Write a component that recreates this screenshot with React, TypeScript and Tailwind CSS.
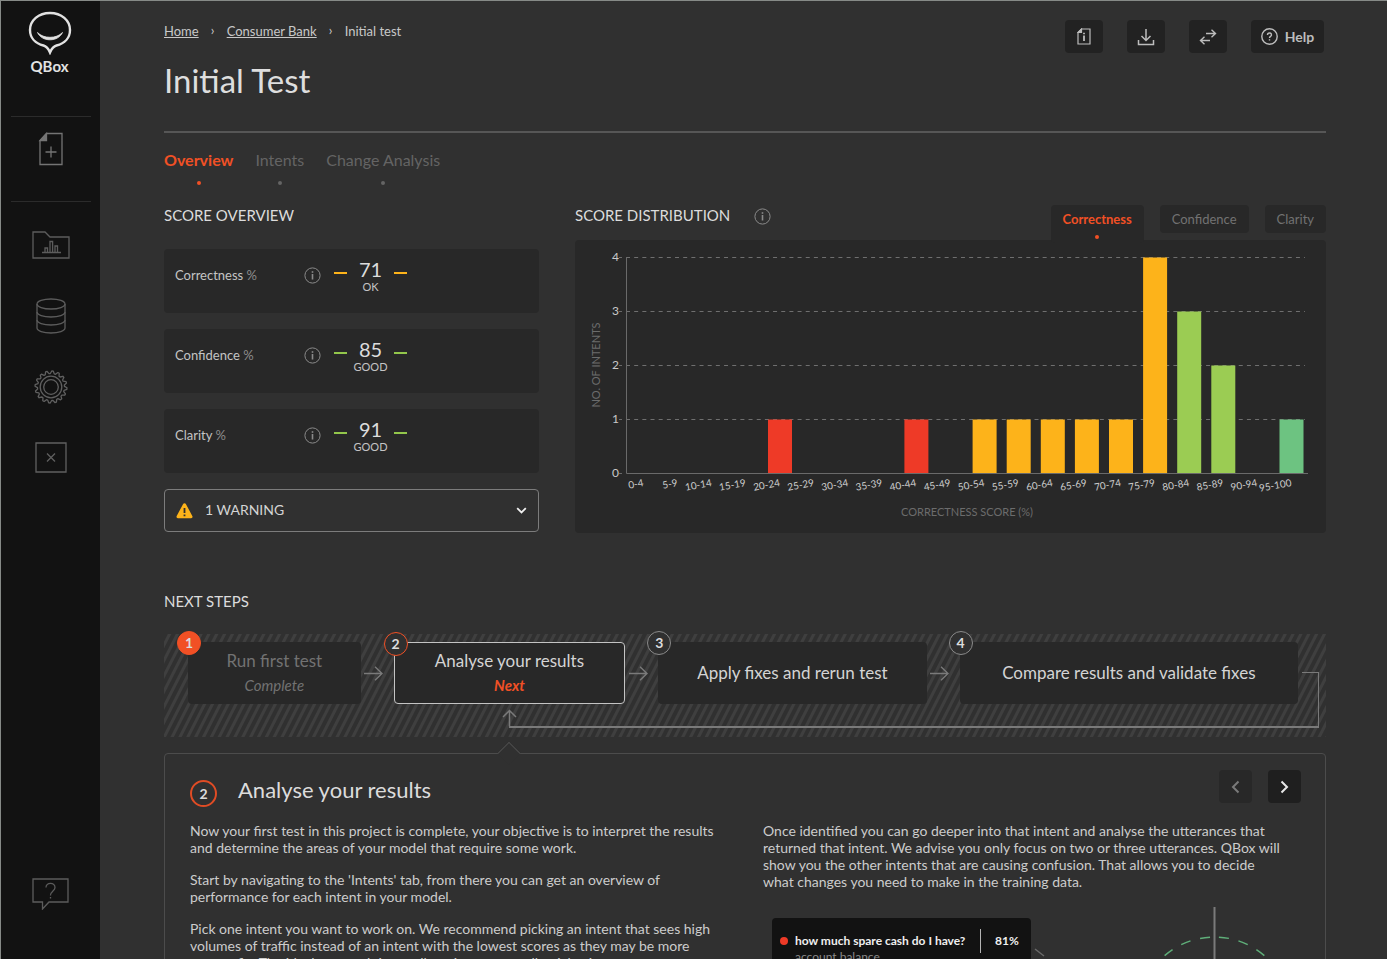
import { ReactNode, useState } from 'react'
import clsx from 'clsx'

const metrics = [
  { name: 'Correctness', score: 71, rating: 'OK', dash: 'bg-[#fdb31a]' },
  { name: 'Confidence', score: 85, rating: 'GOOD', dash: 'bg-[#93c64b]' },
  { name: 'Clarity', score: 91, rating: 'GOOD', dash: 'bg-[#93c64b]' },
]

const RED = '#ee3a27'
const AMBER = '#fdb31a'
const GREEN = '#9bcc53'
const TEAL = '#6dc381'

const buckets = [
  { range: '0-4', count: 0 },
  { range: '5-9', count: 0 },
  { range: '10-14', count: 0 },
  { range: '15-19', count: 0 },
  { range: '20-24', count: 1, color: RED },
  { range: '25-29', count: 0 },
  { range: '30-34', count: 0 },
  { range: '35-39', count: 0 },
  { range: '40-44', count: 1, color: RED },
  { range: '45-49', count: 0 },
  { range: '50-54', count: 1, color: AMBER },
  { range: '55-59', count: 1, color: AMBER },
  { range: '60-64', count: 1, color: AMBER },
  { range: '65-69', count: 1, color: AMBER },
  { range: '70-74', count: 1, color: AMBER },
  { range: '75-79', count: 4, color: AMBER },
  { range: '80-84', count: 3, color: GREEN },
  { range: '85-89', count: 2, color: GREEN },
  { range: '90-94', count: 0 },
  { range: '95-100', count: 1, color: TEAL },
]

function InfoIcon() {
  return (
    <svg className="size-[17px] shrink-0" viewBox="0 0 17 17" fill="none" stroke="#8a8a8a">
      <circle cx="8.5" cy="8.5" r="7.6" />
      <path d="M8.5 7v5.5" strokeWidth="1.6" />
      <path d="M8.5 4.2v1.6" strokeWidth="1.6" />
    </svg>
  )
}

function Sidebar() {
  const link = 'flex h-[71px] w-full items-center justify-center'
  return (
    <aside className="flex w-[99px] shrink-0 flex-col items-center bg-[#121212] pt-[10px]">
      <a href="#" className="flex flex-col items-center pr-0.5 text-[#e2e2e2]">
        <svg className="h-[44px] w-[44px]" viewBox="0 0 44 44" fill="none" stroke="currentColor">
          <path
            d="M22 2C10.500 2 2 9.500 2 19c0 8 5.500 13.500 13.500 15.500 3.200.800 5 3.500 6.500 7 1.500-3.500 3.300-6.200 6.500-7C36.500 32.500 42 27 42 19 42 9.500 33.500 2 22 2Z"
            strokeWidth="2.400"
          />
          <path d="M9.500 21.500c3 3.200 7.500 4.800 12.500 4.800s9.500-1.600 12.500-4.800c-2.200 4.600-6.800 7.300-12.500 7.300S11.700 26.100 9.500 21.500Z" fill="currentColor" strokeWidth=".8" />
        </svg>
        <span className="mt-[3px] text-[15px] leading-4 font-bold">QBox</span>
      </a>

      <hr className="mt-[42px] w-20 border-t border-[#2b2b2b]" />
      <a href="#" aria-label="New test" className="my-[15px]">
        <svg className="h-[34px] w-[26px]" viewBox="0 0 26 34" fill="none" stroke="#747474" strokeWidth="1.300">
          <path d="M8.500 1.500H24v31H2V8.500Z" />
          <path d="M8.500 1.500V8.500H2Z" fill="#747474" />
          <path d="M13 14.500v11M7.500 20h11" />
        </svg>
      </a>
      <hr className="mt-5 w-20 border-t border-[#2b2b2b]" />

      <nav className="mt-[7px] flex w-full flex-col">
        <a href="#" aria-label="Projects" className={link}>
          <svg className="h-[28px] w-[38px]" viewBox="0 0 38 28" fill="none" stroke="#5c5c5c" strokeWidth="1.300">
            <path d="M1 1h12l5 5h19v21H1Z" />
            <path d="M10 21.500h19M13 21.500v-4.500h2.500v4.500M18 21.500v-11h2.600v11M23 21.500v-6.500h2.500v6.500" />
          </svg>
        </a>
        <a href="#" aria-label="Data" className={link}>
          <svg className="h-[36px] w-[30px]" viewBox="0 0 30 36" fill="none" stroke="#5c5c5c" strokeWidth="1.300">
            <ellipse cx="15" cy="6" rx="14" ry="5" />
            <path d="M1 6v24c0 2.800 6.300 5 14 5s14-2.200 14-5V6" />
            <path d="M1 14c0 2.800 6.300 5 14 5s14-2.200 14-5M1 22c0 2.800 6.300 5 14 5s14-2.200 14-5" />
          </svg>
        </a>
        <a href="#" aria-label="Settings" className={link}>
          <GearIcon />
        </a>
        <a href="#" aria-label="Close" className={link}>
          <svg className="h-[31px] w-[32px]" viewBox="0 0 32 31" fill="none" stroke="#606060" strokeWidth="1.300">
            <path d="M1 1h30v29H1Z" />
            <path d="m12 11.500 8 8M20 11.500l-8 8" />
          </svg>
        </a>
      </nav>

      <a href="#" aria-label="Support" className="mt-auto mb-[49px]">
        <svg className="h-[32px] w-[37px]" viewBox="0 0 37 32" fill="none" stroke="#5c5c5c" strokeWidth="1.300">
          <path d="M1 1h35v23H17l-6.500 7v-7H1Z" />
          <path d="M14 9.500c0-2.500 2-4.200 4.500-4.200S23 7 23 9.500c0 3.500-4.500 3.500-4.500 8" />
          <path d="M18.500 19v1.500" />
        </svg>
      </a>
    </aside>
  )
}

function GearIcon() {
  const teeth = 16
  const points = Array.from({ length: teeth * 4 }, (_, i) => {
    const radius = i % 4 < 2 ? 16 : 13.5
    const angle = ((i + 0.5) / (teeth * 4)) * Math.PI * 2
    return `${17 + radius * Math.cos(angle)},${17 + radius * Math.sin(angle)}`
  })
  return (
    <svg className="size-[34px]" viewBox="0 0 34 34" fill="none" stroke="#606060" strokeWidth="1.300">
      <polygon points={points.join(' ')} strokeLinejoin="round" />
      <circle cx="17" cy="17" r="10.800" />
      <circle cx="17" cy="17" r="7.300" />
    </svg>
  )
}

function ToolButton({ label, children }: { label: string; children: ReactNode }) {
  return (
    <button aria-label={label} className="flex h-[33px] w-[38px] items-center justify-center rounded bg-[#222]">
      {children}
    </button>
  )
}

function Header() {
  return (
    <header className="flex items-start justify-between border-b-2 border-[#565656] pt-[19px] pb-[31px]">
      <div className="pt-0.5">
        <nav className="flex items-center text-[13px] leading-4 text-[#c8c8c8]">
          <a href="#" className="underline">Home</a>
          <span className="w-7 pb-0.5 text-center">›</span>
          <a href="#" className="underline">Consumer Bank</a>
          <span className="w-7 pb-0.5 text-center">›</span>
          <span>Initial test</span>
        </nav>
        <h1 className="mt-5 text-[33px] leading-10 text-[#dedede]">Initial Test</h1>
      </div>

      <div className="flex gap-6 pr-0.5 text-[#bdbdbd]">
        <ToolButton label="Report">
          <svg className="h-[17px] w-[14px]" viewBox="0 0 14 17" fill="none" stroke="currentColor" strokeWidth="1.200">
            <path d="M4.500 1H13v15H1V4.500Z" />
            <path d="M4.500 1v3.500H1Z" fill="currentColor" />
            <path d="M7 7.500V13M7 4.800v1.500" strokeWidth="1.800" />
          </svg>
        </ToolButton>
        <ToolButton label="Download">
          <svg className="size-[18px]" viewBox="0 0 18 18" fill="none" stroke="currentColor" strokeWidth="1.500">
            <path d="M9 1v11M4.500 8 9 12.500 13.500 8M1.500 12v4.500h15V12" />
          </svg>
        </ToolButton>
        <ToolButton label="Compare">
          <svg className="h-[16px] w-[18px]" viewBox="0 0 18 16" fill="none" stroke="currentColor" strokeWidth="1.400">
            <path d="M7 4.500h9.500M12.500.800l4 3.700-4 3.700M11 11.500H1.500M5.500 7.800l-4 3.700 4 3.700" />
          </svg>
        </ToolButton>
        <button className="flex h-[33px] w-[73px] items-center justify-center gap-[7px] rounded bg-[#222] text-sm font-bold">
          <svg className="size-[17px]" viewBox="0 0 17 17" fill="none" stroke="currentColor" strokeWidth="1.400">
            <circle cx="8.500" cy="8.500" r="7.700" />
            <path d="M6.500 7c0-1.200.900-2 2-2s2 .800 2 1.900c0 1.500-2 1.500-2 3M8.500 11.200v1.300" />
          </svg>
          Help
        </button>
      </div>
    </header>
  )
}

function PageTabs() {
  return (
    <nav className="mt-[17px] flex gap-[22px] text-base leading-5 text-[#646464]">
      {['Overview', 'Intents', 'Change Analysis'].map((tab, i) => (
        <a key={tab} href="#" className={clsx('flex flex-col items-center gap-[11px]', i === 0 && 'font-bold text-[#f15025]')}>
          {tab}
          <span className="size-1 rounded-full bg-current" />
        </a>
      ))}
    </nav>
  )
}

function ScoreOverview() {
  return (
    <section>
      <h2 className="text-[15px] leading-5 text-[#dcdcdc]">SCORE OVERVIEW</h2>
      <div className="mt-6 flex flex-col gap-4">
        {metrics.map((m) => (
          <div key={m.name} className="flex h-16 items-start rounded bg-[#282828] pl-[11px]">
            <span className="w-[129px] pt-4 text-[13px] leading-5 text-[#c4c4c4]">
              {m.name} <span className="text-[#8c8c8c]">%</span>
            </span>
            <span className="pt-[18px]"><InfoIcon /></span>
            <span className={clsx('mt-[23px] ml-[13px] h-0.5 w-[13px]', m.dash)} />
            <span className="flex w-[47px] flex-col items-center pt-[10px]">
              <span className="text-xl leading-5 text-[#dcdcdc]">{m.score}</span>
              <span className="pt-0.5 text-[11px] leading-3 text-[#c4c4c4]">{m.rating}</span>
            </span>
            <span className={clsx('mt-[23px] h-0.5 w-[13px]', m.dash)} />
          </div>
        ))}
        <button className="flex h-[43px] items-center rounded border border-[#7c7c7c] px-[11px] text-sm text-[#d4d4d4]">
          <svg className="h-4 w-[17px]" viewBox="0 0 17 16">
            <path d="M7 1.200a1.700 1.700 0 0 1 3 0l6.300 11.800a1.500 1.500 0 0 1-1.400 2.300H2A1.500 1.500 0 0 1 .700 13Z" fill={AMBER} />
            <path d="M8.500 5v5M8.500 11.500v1.800" stroke="#303030" strokeWidth="1.800" />
          </svg>
          <span className="ml-3 pb-0.5">1 WARNING</span>
          <svg className="ml-auto h-[7px] w-[11px]" viewBox="0 0 11 7" fill="none" stroke="#f0f0f0" strokeWidth="1.800">
            <path d="m1.200 1.200 4.300 4.300 4.300-4.300" />
          </svg>
        </button>
      </div>
    </section>
  )
}

function DistributionChart() {
  const base = 233.5
  const unit = 54
  const step = 34.1
  return (
    <svg className="w-full" viewBox="0 0 751 293" role="img" aria-label="Score distribution">
      {[0, 1, 2, 3, 4].map((n) => (
        <g key={n}>
          <text x="44" y={base - n * unit + 3} textAnchor="end" fontSize="12" fill="#c9c9c9">{n}</text>
          <path d={`M44 ${base - n * unit}h3`} stroke="#6a6a6a" />
          {n > 0 && <path d={`M51 ${base - n * unit}H730`} stroke="#6f6f6f" strokeDasharray="4 4.170" />}
        </g>
      ))}
      {buckets.map((b, i) => (
        <g key={b.range}>
          {b.count > 0 && (
            <rect x={56.6 + i * step} y={base - b.count * unit} width="24" height={b.count * unit} fill={b.color} />
          )}
          <text
            x={69 + i * step}
            y="246"
            textAnchor="end"
            fontSize="10"
            fill="#cccccc"
            transform={`rotate(-10 ${69 + i * step} 246)`}
          >
            {b.range}
          </text>
        </g>
      ))}
      <path d={`M51.500 17V${base}H733`} fill="none" stroke="#6a6a6a" />
      <text x="392" y="276" textAnchor="middle" fontSize="11" fill="#6c6c6c">CORRECTNESS SCORE (%)</text>
      <text x="25" y="125" textAnchor="middle" fontSize="11" fill="#6c6c6c" transform="rotate(-90 25 125)">
        NO. OF INTENTS
      </text>
    </svg>
  )
}

function ScoreDistribution() {
  const [active, setActive] = useState('Correctness')
  return (
    <section>
      <div className="flex h-[35px] items-start">
        <h2 className="text-[15px] leading-5 text-[#dcdcdc]">SCORE DISTRIBUTION</h2>
        <span className="ml-6 pt-[3px]"><InfoIcon /></span>
        <div className="ml-auto flex gap-4 text-[13px] leading-7">
          {metrics.map(({ name }) => (
            <button
              key={name}
              onClick={() => setActive(name)}
              className={clsx(
                'flex flex-col items-center rounded bg-[#282828] px-3',
                name === active ? 'h-[38px] font-bold text-[#f15025]' : 'h-7 text-[#727272]',
              )}
            >
              {name}
              {name === active && <span className="mt-0.5 size-1 rounded-full bg-current" />}
            </button>
          ))}
        </div>
      </div>
      <div className="rounded bg-[#282828]">
        <DistributionChart />
      </div>
    </section>
  )
}

function StepArrow() {
  return (
    <span className="flex w-[33px] shrink-0 items-center justify-center pr-[7px]">
      <svg className="h-[15px] w-[19px]" viewBox="0 0 19 15" fill="none" stroke="#7a7a7a" strokeWidth="1.400">
        <path d="M0 7.500h18M11 .700l7 6.800-7 6.800" />
      </svg>
    </span>
  )
}

function Step({ n, title, note, className }: { n: number; title: string; note?: string; className: string }) {
  const done = n === 1
  const next = n === 2
  return (
    <div
      className={clsx(
        'relative flex flex-col items-center justify-center rounded bg-[#282828] text-[17px] leading-6',
        next && 'border border-[#c4c4c4]',
        done ? 'text-[#727272]' : 'text-[#d4d4d4]',
        className,
      )}
    >
      <span
        className={clsx(
          'absolute -top-[11px] -left-[11px] flex size-6 items-center justify-center rounded-full border text-sm leading-5 font-bold text-[#dcdcdc]',
          done && 'border-[#f15025] bg-[#f15025]',
          next && 'border-[#f15025] bg-[#303030]',
          n > 2 && 'border-[#8a8a8a] bg-[#303030]',
        )}
      >
        {n}
      </span>
      {title}
      {note && <em className={clsx('text-[15px] leading-6', next && 'font-bold text-[#f15025]')}>{note}</em>}
    </div>
  )
}

function NextSteps() {
  return (
    <section className="mt-[58px]">
      <h2 className="text-[15px] leading-5 text-[#dcdcdc]">NEXT STEPS</h2>
      <div className="relative mt-[23px] h-[103px] bg-[repeating-linear-gradient(117deg,#303030_0px,#303030_3px,#3f3f3f_4px,#3f3f3f_6px,#303030_7px)] pt-2 pr-7 pl-6">
        {/* loop back from the last step to the second */}
        <div className="absolute top-[38px] right-[7px] bottom-[9px] left-[345px] border-r border-b-2 border-[#7a7a7a]">
          <span className="absolute top-0 right-0 w-4 border-t border-[#7a7a7a]" />
          <svg className="absolute bottom-0 -left-[7px] h-[17px] w-[15px]" viewBox="0 0 15 17" fill="none" stroke="#7a7a7a" strokeWidth="1.500">
            <path d="M7.500 17V1.500M1 8l6.500-6.500L14 8" />
          </svg>
        </div>
        <div className="relative flex h-[62px]">
          <Step n={1} title="Run first test" note="Complete" className="flex-[173_1_0px]" />
          <StepArrow />
          <Step n={2} title="Analyse your results" note="Next" className="flex-[230_1_0px]" />
          <StepArrow />
          <Step n={3} title="Apply fixes and rerun test" className="flex-[269_1_0px]" />
          <StepArrow />
          <Step n={4} title="Compare results and validate fixes" className="flex-[339_1_0px]" />
        </div>
      </div>
    </section>
  )
}

function StepDetail() {
  return (
    <section className="relative mt-4 rounded border border-[#4c4c4c] pt-4 pr-6 pl-[25px]">
      <span className="absolute -top-[9px] left-[336px] size-4 rotate-45 border-t border-l border-[#4c4c4c] bg-[#303030]" />
      <div className="flex items-start">
        <span className="mt-[10px] flex size-[27px] items-center justify-center rounded-full border-2 border-[#e04c25] text-sm leading-5 font-bold text-[#dcdcdc]">
          2
        </span>
        <h2 className="mt-2 ml-[21px] text-[22px] leading-6 text-[#dcdcdc]">Analyse your results</h2>
        <div className="ml-auto flex gap-4">
          <button aria-label="Previous step" disabled className="flex size-[33px] items-center justify-center rounded bg-[#282828] text-[#7a7a7a]">
            <svg className="h-[14px] w-[9px]" viewBox="0 0 9 14" fill="none" stroke="currentColor" strokeWidth="2">
              <path d="M7.500 1.500 2 7l5.500 5.500" />
            </svg>
          </button>
          <button aria-label="Next step" className="flex size-[33px] items-center justify-center rounded bg-[#1f1f1f] text-[#e8e8e8]">
            <svg className="h-[14px] w-[9px]" viewBox="0 0 9 14" fill="none" stroke="currentColor" strokeWidth="2">
              <path d="M1.500 1.500 7 7l-5.500 5.500" />
            </svg>
          </button>
        </div>
      </div>

      <div className="mt-[15px] grid grid-cols-2 gap-[35px] text-sm leading-[17px] text-[#cccccc]">
        <div className="flex max-w-[526px] flex-col gap-[15px]">
          <p>
            Now your first test in this project is complete, your objective is to interpret the results
            and determine the areas of your model that require some work.
          </p>
          <p>
            Start by navigating to the 'Intents' tab, from there you can get an overview of
            performance for each intent in your model.
          </p>
          <p>
            Pick one intent you want to work on. We recommend picking an intent that sees high
            volumes of traffic instead of an intent with the lowest scores as they may be more
            easy to fix. The ideal approach is usually to improve small quick wins.
          </p>
        </div>
        <div>
          <p className="max-w-[522px]">
            Once identified you can go deeper into that intent and analyse the utterances that
            returned that intent. We advise you only focus on two or three utterances. QBox will
            show you the other intents that are causing confusion. That allows you to decide
            what changes you need to make in the training data.
          </p>
          <div className="mt-[17px] flex items-start pl-[9px]">
            <div className="mt-[11px] flex h-[84px] w-[259px] shrink-0 rounded-sm bg-[#121212] px-2 pt-[11px]">
              <span className="mt-2 size-2 rounded-full bg-[#ee3a27]" />
              <div className="ml-[7px] w-[185px] text-xs leading-4 text-[#8a8a8a]">
                <p className="pt-1 font-bold text-[#efefef]">how much spare cash do I have?</p>
                <p>account balance</p>
              </div>
              <span className="h-6 border-l border-[#b4b4b4]" />
              <span className="ml-[14px] pt-1 text-xs leading-4 font-bold text-[#efefef]">81%</span>
            </div>
            <svg className="h-[95px] w-[260px] shrink-0" viewBox="0 0 260 95" fill="none" strokeWidth="1.500">
              <path d="M4 42l9 7" stroke="#6a6a6a" />
              <path d="M183.500 0v95" stroke="#7a7a7a" strokeWidth="2" />
              <circle cx="183.500" cy="106" r="76" stroke="#5fae79" strokeDasharray="10 9.900" strokeDashoffset="-4.500" transform="rotate(-90 183.500 106)" />
            </svg>
          </div>
        </div>
      </div>
    </section>
  )
}

export default function App() {
  return (
    <div className="flex h-screen overflow-hidden border-t border-l border-[#868a87] bg-[#303030] font-['Lato','Liberation_Sans',sans-serif]">
      <Sidebar />
      <main className="min-w-0 flex-1 pr-[61px] pl-[64px]">
        <Header />
        <PageTabs />
        <div className="mt-5 grid grid-cols-[375fr_751fr] gap-9">
          <ScoreOverview />
          <ScoreDistribution />
        </div>
        <NextSteps />
        <StepDetail />
      </main>
    </div>
  )
}
